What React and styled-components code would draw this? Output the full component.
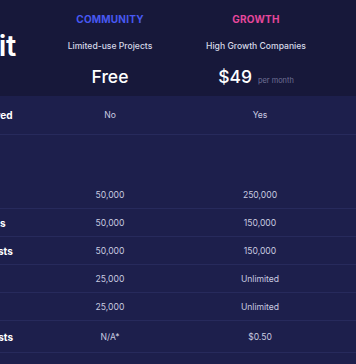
import React from "react";
import styled, { createGlobalStyle } from "styled-components";

const Global = createGlobalStyle`
  html, body { margin: 0; padding: 0; background: #1d1f4c; overflow: hidden; }
  body { font-family: Inter, "Noto Sans", sans-serif; -webkit-font-smoothing: antialiased; }
`;

const Page = styled.div`
  width: 356px;
  height: 364px;
  overflow: hidden;
  background: #1d1f4c;
`;

const Table = styled.div`
  width: 444px;
  margin-left: -88px;
`;

const HeaderBar = styled.div`
  display: grid;
  grid-template-columns: 123px 150px 150px 1fr;
  height: 96px;
  background: #17183a;
`;

const Heading = styled.div`
  display: flex;
  align-items: center;
  justify-content: flex-end;
  padding-right: 19px;
  padding-bottom: 6px;
  color: #ffffff;
  font-size: 29px;
  font-weight: 600;
  letter-spacing: -0.3px;
  white-space: nowrap;
`;

const PlanHead = styled.div`
  display: flex;
  flex-direction: column;
  align-items: center;
  padding-top: 13px;
  padding-right: ${(p) => p.$shift || 0}px;
`;

const Tier = styled.div`
  font-size: 10px;
  line-height: 12px;
  font-weight: 700;
  letter-spacing: 0.2px;
  text-transform: uppercase;
  color: ${(p) => p.$color};
`;

const Audience = styled.div`
  margin-top: 15px;
  font-size: 8.6px;
  line-height: 12px;
  font-weight: 500;
  color: #d6d8e8;
  white-space: nowrap;
`;

const Price = styled.div`
  margin-top: 13px;
  display: flex;
  align-items: baseline;
  gap: 6px;
  color: #ffffff;
  line-height: 24px;
`;

const Amount = styled.span`
  font-size: 17.5px;
  font-weight: 500;
`;

const Period = styled.span`
  font-size: 7.4px;
  color: #6f7196;
`;

const Row = styled.div`
  display: grid;
  grid-template-columns: 123px 150px 150px 1fr;
  align-items: center;
  height: ${(p) => p.$h}px;
  border-bottom: ${(p) => (p.$noLine ? "none" : "1px solid #272a5c")};
  box-sizing: border-box;
`;

const Label = styled.div`
  font-size: 10px;
  font-weight: 700;
  color: #ffffff;
  white-space: nowrap;
`;

const Value = styled.div`
  text-align: center;
  font-size: 8.6px;
  color: #c9cbe0;
`;

const rows = [
  { label: "Active Users", a: "50,000", b: "250,000" },
  { label: "Recorded Sessions", a: "50,000", b: "150,000" },
  { label: "Public App Requests", a: "50,000", b: "150,000" },
  { label: "Workflow Runs", a: "25,000", b: "Unlimited" },
  { label: "Stored Jobs", a: "25,000", b: "Unlimited" },
  { label: "Overage Email Costs", a: "N/A*", b: "$0.50" },
];

export default function App() {
  return (
    <Page>
      <Global />
      <Table>
        <HeaderBar>
          <Heading>Find your fit</Heading>
          <PlanHead>
            <Tier $color="#4858f2">Community</Tier>
            <Audience>Limited-use Projects</Audience>
            <Price>
              <Amount>Free</Amount>
            </Price>
          </PlanHead>
          <PlanHead $shift={8}>
            <Tier $color="#e6479c">Growth</Tier>
            <Audience>High Growth Companies</Audience>
            <Price>
              <Amount>$49</Amount>
              <Period>per month</Period>
            </Price>
          </PlanHead>
          <div />
        </HeaderBar>
        <Row $h={39}>
          <Label>Commercial Allowed</Label>
          <Value>No</Value>
          <Value>Yes</Value>
          <div />
        </Row>
        <Row $h={46} $noLine>
          <Label>Usage</Label>
          <div />
          <div />
          <div />
        </Row>
        {rows.map((r, i) => (
          <Row key={i} $h={i === rows.length - 1 ? 32 : 28}>
            <Label>{r.label}</Label>
            <Value>{r.a}</Value>
            <Value>{r.b}</Value>
            <div />
          </Row>
        ))}
      </Table>
    </Page>
  );
}
